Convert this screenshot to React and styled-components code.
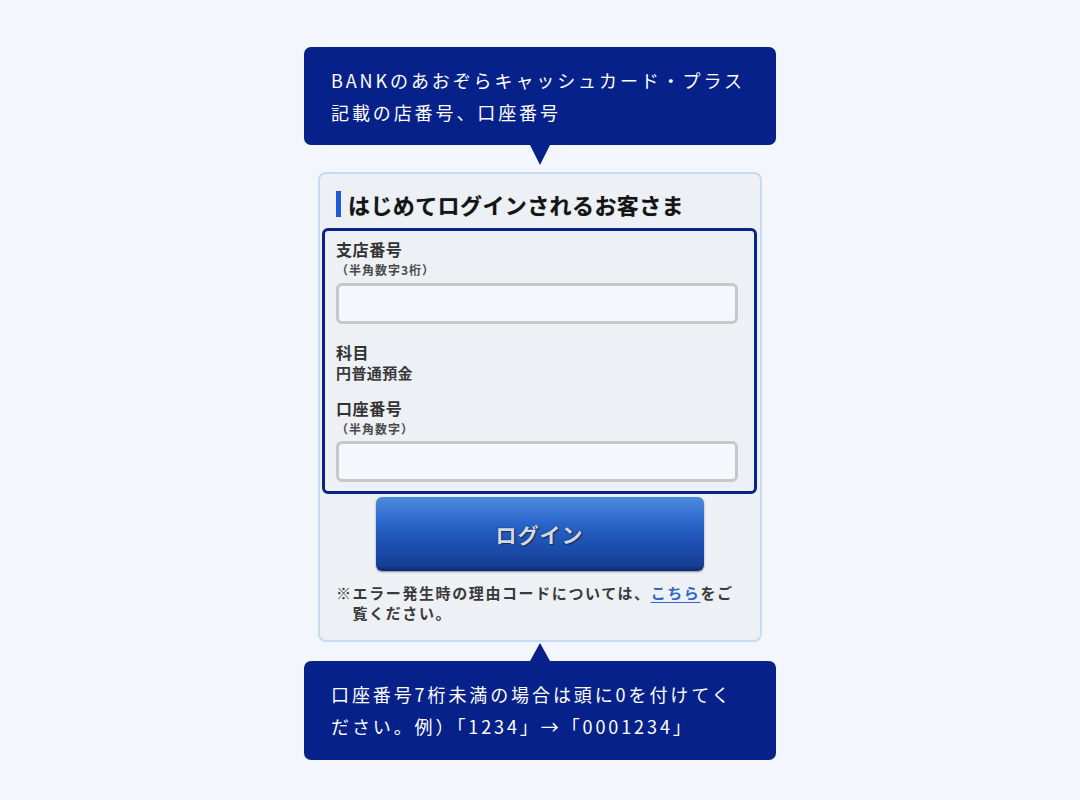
import styled, { createGlobalStyle } from "styled-components";

const Global = createGlobalStyle`
  html, body {
    margin: 0;
    padding: 0;
    background: #f3f6fd;
  }
  body {
    font-family: "Noto Sans CJK JP", "Noto Sans", sans-serif;
  }
`;

const Page = styled.div`
  min-height: 800px;
  display: flex;
  justify-content: center;
  padding-top: 47px;
  box-sizing: border-box;
`;

const Column = styled.div`
  width: 472px;
  display: flex;
  flex-direction: column;
  align-items: center;
`;

const Callout = styled.div`
  position: relative;
  width: 100%;
  box-sizing: border-box;
  background: #06228a;
  color: #fff;
  border-radius: 7px;
  padding: 17px 20px 17px 27px;
  font-size: 18px;
  line-height: 32px;
  letter-spacing: 2.9px;
  height: ${(p) => (p.$up ? "99px" : "98px")};

  &::after {
    content: "";
    position: absolute;
    left: 50%;
    margin-left: -10px;
    border-left: 10px solid transparent;
    border-right: 10px solid transparent;
    ${(p) =>
      p.$up
        ? `bottom: 100%; border-bottom: 18px solid #06228a;`
        : `top: 100%; border-top: 20px solid #06228a;`}
  }
`;

const Card = styled.div`
  width: 444px;
  box-sizing: border-box;
  margin: 27px 0 19px;
  background: #edf0f5;
  border: 2px solid #c6daf4;
  border-radius: 8px;
  padding: 16px 3px 17px 2px;
`;

const Heading = styled.h2`
  margin: 0 0 10px 14px;
  display: flex;
  align-items: center;
  gap: 7px;
  font-size: 22px;
  line-height: 28px;
  font-weight: 700;
  color: #141414;
  letter-spacing: 0.4px;
  text-shadow: 0 0 1px rgba(0, 0, 0, 0.35);

  &::before {
    content: "";
    width: 5px;
    height: 26px;
    background: #1d5bd2;
  }
`;

const FormBox = styled.div`
  border: 3px solid #0a2388;
  border-radius: 6px;
  padding: 8px 16px 9px 11px;
`;

const Label = styled.div`
  font-size: 16px;
  line-height: 20px;
  font-weight: 700;
  color: #333;
  letter-spacing: 0.6px;
  margin-top: ${(p) => p.$gap || 0}px;
`;

const Value = styled.div`
  font-size: 15px;
  line-height: 21px;
  font-weight: 700;
  color: #383838;
  letter-spacing: 0.4px;
`;

const Sub = styled.div`
  font-size: 12px;
  line-height: 16px;
  font-weight: 700;
  color: #4a4a4a;
  letter-spacing: 1px;
  margin-top: 3px;
`;

const Input = styled.input`
  display: block;
  width: 100%;
  height: 41px;
  box-sizing: border-box;
  margin-top: ${(p) => p.$gap}px;
  border: 3px solid #c6c7c9;
  border-radius: 6px;
  background: #f5f7fc;
  outline: none;
`;

const LoginButton = styled.button`
  display: block;
  width: 328px;
  height: 74px;
  margin: 3px auto 0;
  border: none;
  border-radius: 6px;
  background: linear-gradient(
    to bottom,
    #4e8ade 0%,
    #2a66c9 35%,
    #1c4fb0 65%,
    #173f95 92%,
    #0d2a6b 100%
  );
  box-shadow: 0 1px 2px rgba(20, 40, 90, 0.5);
  font-family: inherit;
  font-size: 21px;
  font-weight: 700;
  letter-spacing: 1px;
  color: #d2d8e4;
  text-shadow: 1px 1px 1px #1a2a50, 0 0 2px rgba(0, 0, 0, 0.5);
`;

const Note = styled.p`
  margin: 12px 18px 0 14px;
  padding-left: 1.1em;
  text-indent: -1.1em;
  font-size: 15px;
  line-height: 20px;
  font-weight: 700;
  color: #3a3a3a;
  letter-spacing: 1.6px;

  a {
    color: #2f66c8;
    text-decoration: underline;
    text-decoration-thickness: 1px;
    text-underline-offset: 3px;
  }
`;

export default function App() {
  return (
    <>
      <Global />
      <Page>
        <Column>
          <Callout>
            BANKのあおぞらキャッシュカード・プラス
            <br />
            記載の店番号、口座番号
          </Callout>

          <Card>
            <Heading>はじめてログインされるお客さま</Heading>
            <FormBox>
              <Label>支店番号</Label>
              <Sub>（半角数字3桁）</Sub>
              <Input $gap={5} />
              <Label $gap={18}>科目</Label>
              <Value>円普通預金</Value>
              <Label $gap={15}>口座番号</Label>
              <Sub>（半角数字）</Sub>
              <Input $gap={4} />
            </FormBox>
            <LoginButton>ログイン</LoginButton>
            <Note>
              ※エラー発生時の理由コードについては、<a href="#">こちら</a>
              をご覧ください。
            </Note>
          </Card>

          <Callout $up>
            口座番号7桁未満の場合は頭に0を付けてく
            <br />
            ださい。例）「1234」→「0001234」
          </Callout>
        </Column>
      </Page>
    </>
  );
}
